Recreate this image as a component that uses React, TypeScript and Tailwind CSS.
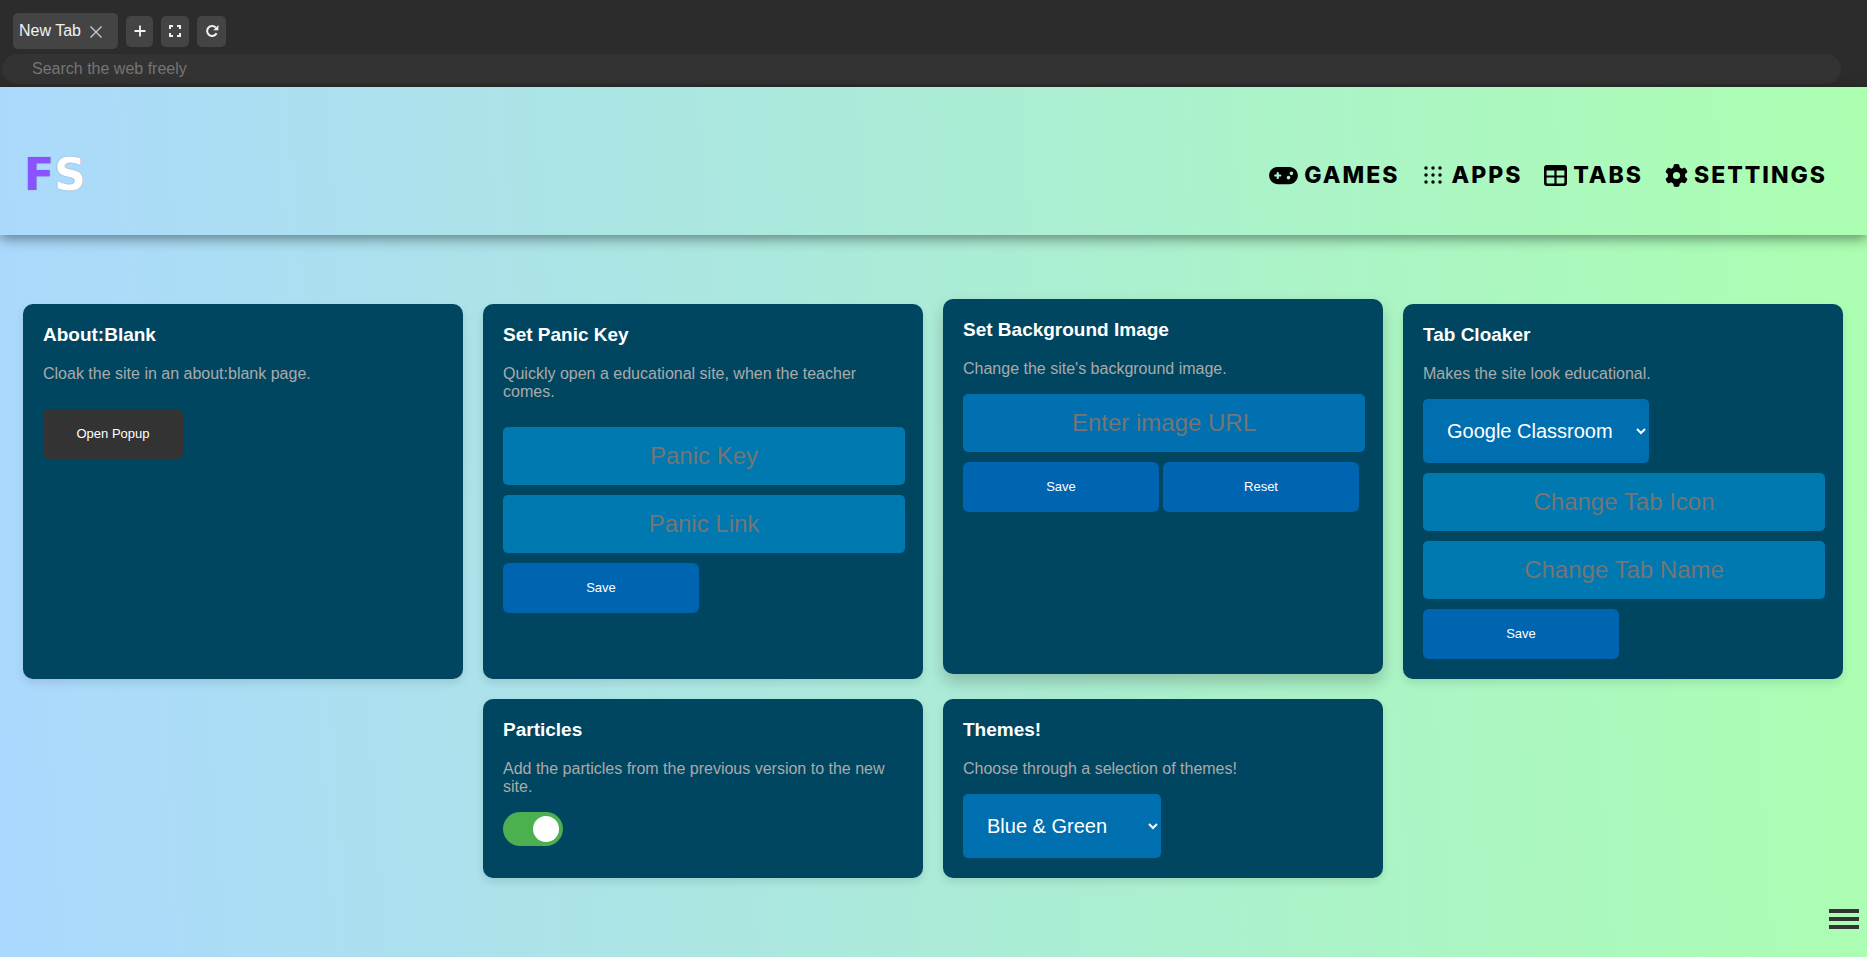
import React, { useState } from "react";
import type { ReactNode } from "react";
import { FaGamepad, FaGear } from "react-icons/fa6";

const fieldBase =
  "block h-[58px] w-[402px] rounded-[5px] px-5 text-center text-[24px] text-white outline-none placeholder:text-[#757575]";
const buttonText = "text-[13px] font-medium text-white";
const saveButton = `h-[50px] w-[196px] rounded-[6px] bg-[#0065b1] hover:bg-[#0072c6] ${buttonText}`;
const selectBase =
  "block h-16 rounded-[5px] bg-[#006fb0] pl-5 text-[20px] text-white outline-none";
const toolButton =
  "flex h-[31px] items-center justify-center rounded-[5px] bg-[#444] text-[#f2f2f2]";

function DotsIcon() {
  const steps = [5, 12, 19];
  return (
    <svg width="24" height="24" viewBox="0 0 24 24" fill="currentColor" aria-hidden="true">
      {steps.map((y) => steps.map((x) => <circle key={`${x}-${y}`} cx={x} cy={y} r="1.75" />))}
    </svg>
  );
}

function TableIcon() {
  return (
    <svg width="23" height="21" viewBox="0 0 23 21" fill="currentColor" aria-hidden="true">
      <path
        fillRule="evenodd"
        d="M3 0H20a3 3 0 0 1 3 3V18a3 3 0 0 1-3 3H3a3 3 0 0 1-3-3V3a3 3 0 0 1 3-3zM2.6 5.4V10.4H10.4V5.4zM12.6 5.4V10.4H20.4V5.4zM2.6 12.6V17.6q0 .8.8.8H10.4V12.6zM12.6 12.6V18.4H19.6q.8 0 .8-.8V12.6z"
      />
    </svg>
  );
}

function NavLink({ icon, children }: { icon: ReactNode; children: ReactNode }) {
  return (
    <a href="#" className="flex items-center gap-1.5 text-[23px] leading-8 font-extrabold tracking-[2px]">
      {icon}
      {children}
    </a>
  );
}

function Card({
  title,
  text,
  raised = false,
  children,
}: {
  title: string;
  text: string;
  raised?: boolean;
  children: ReactNode;
}) {
  return (
    <section
      className={
        raised
          ? "w-[440px] -translate-y-[5px] rounded-[10px] bg-[#004661] p-5 shadow-[0_8px_16px_rgba(0,0,0,0.2)]"
          : "w-[440px] rounded-[10px] bg-[#004661] p-5 shadow-[0_4px_8px_rgba(0,0,0,0.1)]"
      }
    >
      <h2 className="text-[19px] leading-[21px] font-bold text-white">{title}</h2>
      <p className="mt-5 mb-4 text-[16px] leading-[18px] text-[#aaa]">{text}</p>
      {children}
    </section>
  );
}

export default function App() {
  const [particles, setParticles] = useState(true);

  return (
    <div className="flex min-h-screen flex-col bg-[linear-gradient(86deg,#abd8ff_0%,#abffb0_100%)] font-['Liberation_Sans',Arial,sans-serif]">
      <div className="h-[87px] bg-[#2c2c2c]">
        <div className="flex h-[54px] items-center gap-2 px-[13px] pt-2">
          <div className="flex h-9 w-[105px] items-center rounded-[5px] bg-[#444] pl-1.5 text-[16px] text-[#f2f2f2]">
            <span>New Tab</span>
            <button type="button" aria-label="Close tab" className="mt-0.5 ml-2 text-[#ccc]">
              <svg width="14" height="14" viewBox="0 0 14 14" stroke="currentColor" strokeWidth="1.3" aria-hidden="true">
                <path d="M1.5 1.5l11 11M12.5 1.5l-11 11" />
              </svg>
            </button>
          </div>
          <button type="button" aria-label="New tab" className={`${toolButton} w-[27px]`}>
            <svg width="12" height="12" viewBox="0 0 12 12" stroke="currentColor" strokeWidth="1.8" aria-hidden="true">
              <path d="M6 .5v11M.5 6h11" />
            </svg>
          </button>
          <button type="button" aria-label="Fullscreen" className={`${toolButton} w-7`}>
            <svg width="12" height="12" viewBox="0 0 12 12" fill="none" stroke="currentColor" strokeWidth="2" aria-hidden="true">
              <path d="M1 4V1h3M8 1h3v3M11 8v3H8M4 11H1V8" />
            </svg>
          </button>
          <button type="button" aria-label="Reload" className={`${toolButton} w-[29px]`}>
            <svg width="14" height="14" viewBox="0 0 14 14" fill="none" stroke="currentColor" strokeWidth="2" aria-hidden="true">
              <path d="M11.6 9.2A5 5 0 1 1 10.8 3.6" />
              <path d="M13.4 1v5.2H8.2z" fill="currentColor" stroke="none" />
            </svg>
          </button>
        </div>
        <div className="pr-[26px] pl-0.5">
          <input
            type="text"
            aria-label="Search the web freely"
            placeholder="Search the web freely"
            className="block h-[30px] w-full rounded-full bg-[#333] px-[30px] text-[16px] text-white outline-none placeholder:text-[#757575]"
          />
        </div>
      </div>

      <header className="flex h-[148px] items-center justify-between pt-7 pr-10 pl-6 shadow-[0_4px_12px_rgba(0,0,0,0.42)]">
        <a
          href="#"
          className="font-['DejaVu_Sans',sans-serif] text-[44px] font-bold text-white [text-shadow:0_0_1px_rgba(0,0,0,0.4)]"
        >
          <span className="text-[#8c52ff]">F</span>S
        </a>
        <nav className="flex items-center gap-[22px] font-['Inter',sans-serif] text-black">
          <NavLink icon={<FaGamepad size={23} className="w-[29px]" />}>GAMES</NavLink>
          <NavLink icon={<DotsIcon />}>APPS</NavLink>
          <NavLink icon={<TableIcon />}>TABS</NavLink>
          <NavLink icon={<FaGear size={23} />}>SETTINGS</NavLink>
        </nav>
      </header>

      <main className="flex flex-wrap justify-center gap-5 pt-[69px] pr-px pb-20">
        <Card title="About:Blank" text="Cloak the site in an about:blank page.">
          <button type="button" className={`mt-2.5 h-[50px] w-[140px] rounded-[6px] bg-[#333] ${buttonText}`}>
            Open Popup
          </button>
        </Card>

        <Card title="Set Panic Key" text="Quickly open a educational site, when the teacher comes.">
          <div className="mt-[26px] flex flex-col items-start gap-2.5">
            <input aria-label="Panic Key" placeholder="Panic Key" className={`${fieldBase} bg-[#0079b1]`} />
            <input aria-label="Panic Link" placeholder="Panic Link" className={`${fieldBase} bg-[#0079b1]`} />
            <button type="button" className={saveButton}>
              Save
            </button>
          </div>
        </Card>

        <Card raised title="Set Background Image" text="Change the site's background image.">
          <input aria-label="Enter image URL" placeholder="Enter image URL" className={`${fieldBase} bg-[#0070b0]`} />
          <div className="mt-2.5 flex gap-1">
            <button type="button" className={saveButton}>
              Save
            </button>
            <button type="button" className={saveButton}>
              Reset
            </button>
          </div>
        </Card>

        <Card title="Tab Cloaker" text="Makes the site look educational.">
          <div className="flex flex-col items-start gap-2.5">
            <select aria-label="Tab preset" className={`${selectBase} w-[226px]`}>
              <option>Google Classroom</option>
              <option>Google Drive</option>
            </select>
            <input aria-label="Change Tab Icon" placeholder="Change Tab Icon" className={`${fieldBase} bg-[#0079b1]`} />
            <input aria-label="Change Tab Name" placeholder="Change Tab Name" className={`${fieldBase} bg-[#0079b1]`} />
            <button type="button" className={saveButton}>
              Save
            </button>
          </div>
        </Card>

        <Card title="Particles" text="Add the particles from the previous version to the new site.">
          <label className="block h-[34px] w-[60px] cursor-pointer rounded-full bg-[#ccc] p-1 has-checked:bg-[#4caf50]">
            <input
              type="checkbox"
              aria-label="Particles"
              checked={particles}
              onChange={(e) => setParticles(e.target.checked)}
              className="block h-[26px] w-[26px] appearance-none rounded-full bg-white checked:ml-auto"
            />
          </label>
        </Card>

        <Card title="Themes!" text="Choose through a selection of themes!">
          <select aria-label="Theme" className={`${selectBase} w-[198px]`}>
            <option>Blue &amp; Green</option>
            <option>Dark</option>
          </select>
        </Card>
      </main>

      <button type="button" aria-label="Menu" className="fixed right-2 bottom-7 flex w-[30px] flex-col gap-1">
        <span className="h-1 bg-[#333]" />
        <span className="h-1 bg-[#333]" />
        <span className="h-1 bg-[#333]" />
      </button>
    </div>
  );
}
